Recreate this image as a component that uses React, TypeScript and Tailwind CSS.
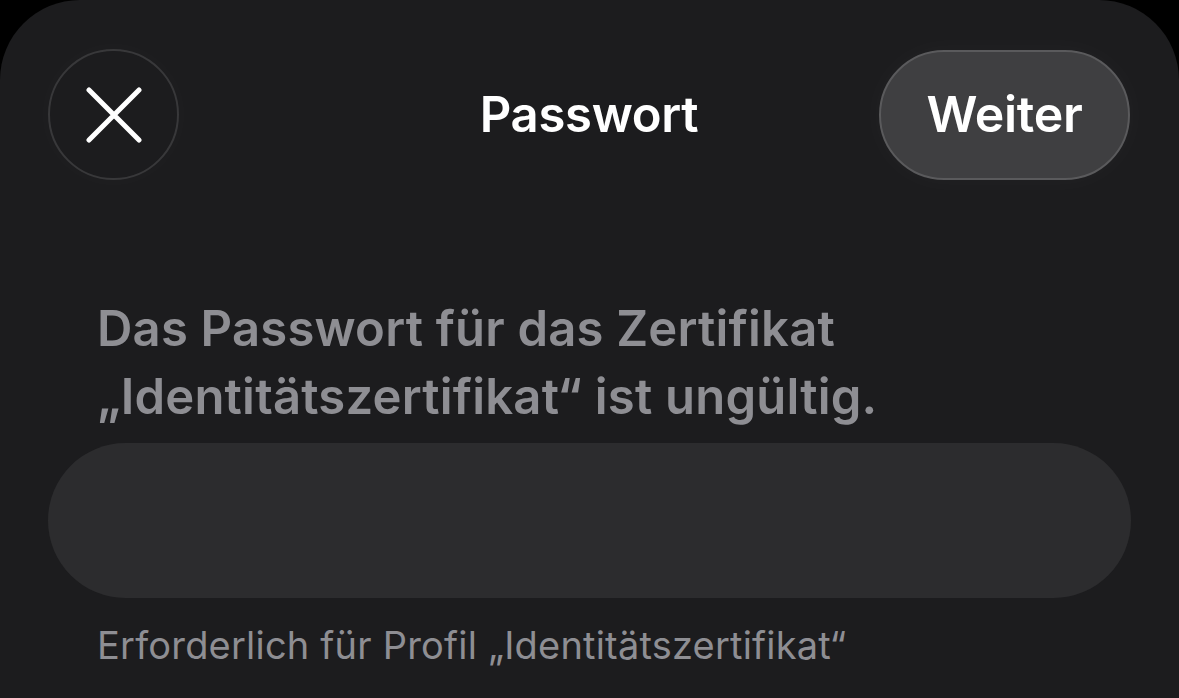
const font = { fontFamily: "Inter, 'Noto Sans', sans-serif" };

const CloseIcon = () => (
  <svg width="56" height="56" viewBox="0 0 56 56" fill="none">
    <path d="M3 3 L53 53 M53 3 L3 53" stroke="white" strokeWidth="5" strokeLinecap="round" />
  </svg>
);

export default function App() {
  return (
    <div className="w-[1179px] h-[698px] bg-black overflow-hidden" style={font}>
      <div className="h-full bg-[#1c1c1e] rounded-t-[80px] pt-[49px]">
        {/* header */}
        <div className="grid grid-cols-[1fr_auto_1fr] items-center pl-[48px] pr-[49px]">
          <button className="justify-self-start w-[131px] h-[131px] rounded-full border-2 border-[#38383a] bg-[#1c1c1e] flex items-center justify-center shadow-[0_0_30px_rgba(255,255,255,0.025)]">
            <CloseIcon />
          </button>
          <h1 className="text-[49px] font-semibold text-white tracking-[-0.3px]">Passwort</h1>
          <button className="justify-self-end w-[251px] h-[130px] rounded-full bg-[#3f3f41] border-2 border-[#5a5a5c] text-white text-[50px] font-semibold tracking-[-0.3px] shadow-[0_0_30px_rgba(255,255,255,0.03)]">
            Weiter
          </button>
        </div>

        {/* message */}
        <p className="mt-[115px] px-[97px] text-[49px] leading-[68px] font-semibold text-[#8e8e93] tracking-[0.2px]">
          Das Passwort für das Zertifikat
          <br />
          „Identitätszertifikat“ ist ungültig.
        </p>

        {/* input */}
        <div className="mx-[48px] mt-[12px] h-[155px] rounded-full bg-[#2c2c2e]" />

        {/* footer */}
        <p className="mt-[24px] px-[97px] text-[38px] leading-[46px] text-[#8e8e93] tracking-[0.2px]">
          Erforderlich für Profil „Identitätszertifikat“
        </p>
      </div>
    </div>
  );
}
